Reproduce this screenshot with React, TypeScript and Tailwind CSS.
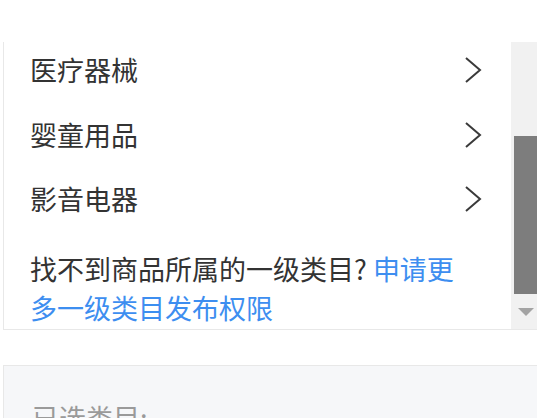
import React, { FC } from "react";

const categories = ["医疗器械", "婴童用品", "影音电器"];

const Chevron: FC = () => (
  <svg width="20" height="28" viewBox="0 0 20 28" fill="none">
    <polyline
      points="3,2 17,14 3,26"
      stroke="#3a3a3a"
      strokeWidth="2"
      strokeLinejoin="miter"
    />
  </svg>
);

const App: FC = () => {
  return (
    <div
      className="w-[537px] h-[418px] overflow-hidden bg-white pt-[42px] text-[#333]"
      style={{ fontFamily: '"Noto Sans CJK SC", "Noto Sans", sans-serif' }}
    >
      {/* category list, scrolled */}
      <div className="ml-[3px] w-[535px] h-[288px] flex border-l border-b border-[#e8e8e8]">
        <div className="flex-1 overflow-hidden">
          <div className="-mt-[4px]">
            {categories.map((name) => (
              <div
                key={name}
                className="h-[64.5px] flex items-center justify-between pl-[26px] pr-[28px] text-[27px]"
              >
                <span>{name}</span>
                <Chevron />
              </div>
            ))}
            <p className="mt-[17px] pl-[26px] pr-[40px] text-[27px] leading-[39px]">
              找不到商品所属的一级类目?{" "}
              <a className="text-[#3d8ef0] cursor-pointer">申请更多一级类目发布权限</a>
            </p>
          </div>
        </div>
        <div className="w-[27px] bg-[#f1f1f1] flex flex-col">
          <div className="h-[94px]" />
          <div className="ml-[3px] h-[158px] bg-[#7d7d7d]" />
          <div className="flex justify-center pt-[14px] pl-[3px]">
            <svg width="16" height="8" viewBox="0 0 16 8">
              <polygon points="0,0 16,0 8,8" fill="#a3a3a3" />
            </svg>
          </div>
        </div>
      </div>

      {/* selected category */}
      <div className="mt-[35px] ml-[3px] w-[545px] h-[120px] bg-[#f6f7f9] border border-[#e8e8e8] pt-[32px] pl-[28px]">
        <span className="text-[27px] text-[#9a9a9a]">已选类目:</span>
      </div>
    </div>
  );
};

export default App;
